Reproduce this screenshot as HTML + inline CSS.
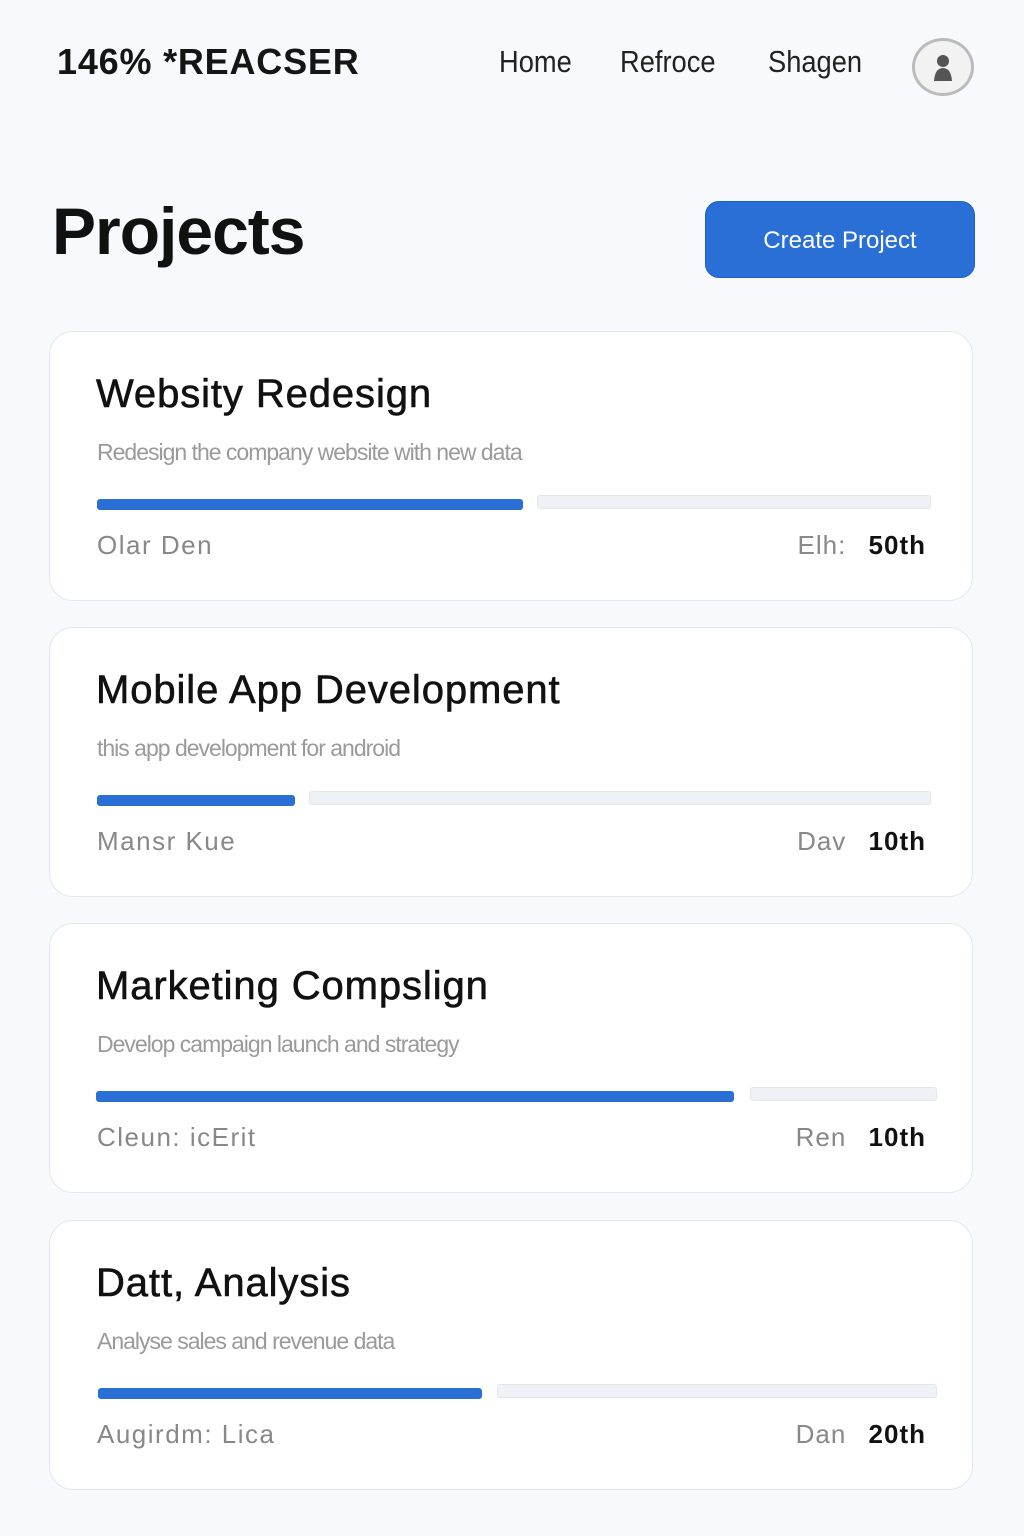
<!DOCTYPE html>
<html><head><meta charset="utf-8"><style>
*{margin:0;padding:0;box-sizing:border-box}
body{width:1024px;height:1536px;background:#f7f9fc;font-family:"Liberation Sans",sans-serif;position:relative;overflow:hidden}
.a{position:absolute;white-space:nowrap}
.logo{left:57px;top:41px;font-size:36px;font-weight:bold;color:#151515;letter-spacing:0.8px}
.nav{top:44px;font-size:31px;color:#222;transform:scaleX(.88);transform-origin:left}
.av{left:912px;top:38px;width:62px;height:58px;border-radius:50%;border:3px solid #bbb;background:#f2f2f2}
.h1{left:52px;top:193px;font-size:66px;font-weight:bold;color:#111;letter-spacing:-1px}
.btn{left:705px;top:201px;width:270px;height:77px;background:#2a6fd6;border-radius:14px;color:#fff;font-size:24px;text-align:center;line-height:77px;border:1px solid #1d5fc4}
.card{position:absolute;left:49px;width:924px;height:270px;background:#fff;border:1.5px solid #e3e8f0;border-radius:24px}
.t{position:absolute;left:46px;top:40px;font-size:40px;color:#111;white-space:nowrap;letter-spacing:0.9px;-webkit-text-stroke:0.6px #111}
.d{position:absolute;left:47px;top:107px;font-size:23px;color:#9a9a9a;white-space:nowrap;letter-spacing:-1px}
.tr{position:absolute;top:163px;height:14px;background:#eef1f5;border:1px solid #e2e7ee;border-radius:3px}
.b{position:absolute;top:167px;height:11px;background:#2a6fd6;border-radius:3px}
.l{position:absolute;left:47px;top:198px;font-size:26px;color:#888;letter-spacing:1.5px}
.r{position:absolute;right:46px;top:198px;font-size:26px;color:#888;letter-spacing:1px}
.r b{color:#111;margin-left:14px}
</style></head><body>
<div class="a logo">146% *REACSER</div>
<div class="a nav" style="left:499px">Home</div>
<div class="a nav" style="left:620px">Refroce</div>
<div class="a nav" style="left:768px">Shagen</div>
<div class="a av"><svg width="56" height="52" viewBox="0 0 56 52"><circle cx="28" cy="20" r="6" fill="#555"/><path d="M19 40 Q20 27 28 27 Q36 27 37 40Z" fill="#555"/></svg></div>
<div class="a h1">Projects</div>
<div class="a btn">Create Project</div>

<div class="card" style="top:331px"><div class="t">Websity Redesign</div><div class="d">Redesign the company website with new data</div>
<div class="tr" style="left:487px;width:394px"></div><div class="b" style="left:47px;width:426px"></div>
<div class="l">Olar Den</div><div class="r">Elh: <b>50th</b></div></div>

<div class="card" style="top:627px"><div class="t">Mobile App Development</div><div class="d">this app development for android</div>
<div class="tr" style="left:259px;width:622px"></div><div class="b" style="left:47px;width:198px"></div>
<div class="l">Mansr Kue</div><div class="r">Dav <b>10th</b></div></div>

<div class="card" style="top:923px"><div class="t">Marketing Compslign</div><div class="d">Develop campaign launch and strategy</div>
<div class="tr" style="left:700px;width:187px"></div><div class="b" style="left:46px;width:638px"></div>
<div class="l">Cleun: icErit</div><div class="r">Ren <b>10th</b></div></div>

<div class="card" style="top:1220px"><div class="t">Datt, Analysis</div><div class="d">Analyse sales and revenue data</div>
<div class="tr" style="left:447px;width:440px"></div><div class="b" style="left:48px;width:384px"></div>
<div class="l">Augirdm: Lica</div><div class="r">Dan <b>20th</b></div></div>
</body></html>
